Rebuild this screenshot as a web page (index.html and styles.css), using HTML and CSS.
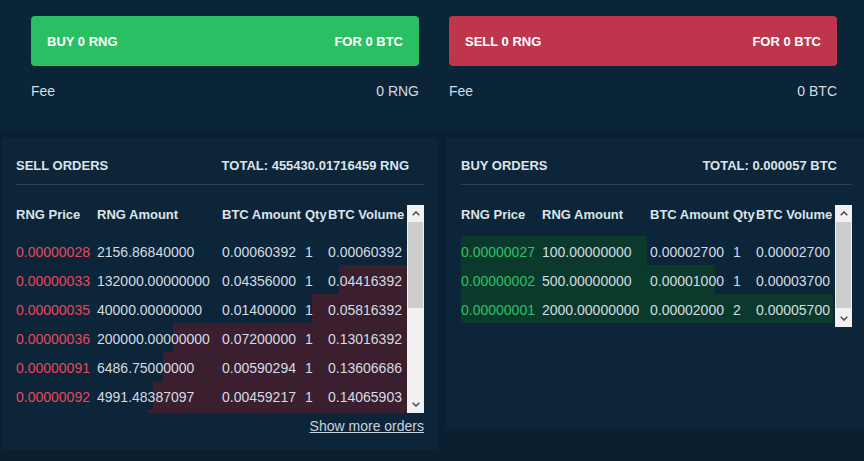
FILE: index.html
```html
<!DOCTYPE html>
<html lang="en">
<head>
    <meta charset="UTF-8">
    <meta name="viewport" content="width=device-width, initial-scale=1.0">
    <title>RNG / BTC</title>
    <link rel="stylesheet" href="styles.css">
</head>
<body>
    <div class="trade">
        <div class="trade-col">
            <div class="trade-btn buy">
                <span>BUY 0 RNG</span>
                <span>FOR 0 BTC</span>
            </div>
            <div class="fee">
                <span>Fee</span>
                <span>0 RNG</span>
            </div>
        </div>
        <div class="trade-col">
            <div class="trade-btn sell">
                <span>SELL 0 RNG</span>
                <span>FOR 0 BTC</span>
            </div>
            <div class="fee">
                <span>Fee</span>
                <span>0 BTC</span>
            </div>
        </div>
    </div>

    <div class="books">
        <!-- sell orders -->
        <div class="book book-sell">
            <div class="book-head">
                <span>SELL ORDERS</span>
                <span>TOTAL: 455430.01716459 RNG</span>
            </div>
            <div class="orders orders-sell">
                <div class="orders-list">
                    <div class="row row-head">
                        <span>RNG Price</span><span>RNG Amount</span><span>BTC Amount</span><span>Qty</span><span>BTC Volume</span>
                    </div>
                    <div class="row" style="--depth:0%">
                        <span class="price">0.00000028</span><span>2156.86840000</span><span>0.00060392</span><span>1</span><span>0.00060392</span>
                    </div>
                    <div class="row" style="--depth:17.4%">
                        <span class="price">0.00000033</span><span>132000.00000000</span><span>0.04356000</span><span>1</span><span>0.04416392</span>
                    </div>
                    <div class="row" style="--depth:24.3%">
                        <span class="price">0.00000035</span><span>40000.00000000</span><span>0.01400000</span><span>1</span><span>0.05816392</span>
                    </div>
                    <div class="row" style="--depth:59.8%">
                        <span class="price">0.00000036</span><span>200000.00000000</span><span>0.07200000</span><span>1</span><span>0.13016392</span>
                    </div>
                    <div class="row" style="--depth:62.4%">
                        <span class="price">0.00000091</span><span>6486.75000000</span><span>0.00590294</span><span>1</span><span>0.13606686</span>
                    </div>
                    <div class="row" style="--depth:65%">
                        <span class="price">0.00000092</span><span>4991.48387097</span><span>0.00459217</span><span>1</span><span>0.14065903</span>
                    </div>
                    <div class="row row-next" style="--depth:66.5%"></div>
                </div>
                <div class="scrollbar">
                    <div class="sb-btn">
                        <svg width="8" height="5" viewBox="0 0 8 5"><path d="M0.7 4.3 L4 1 L7.3 4.3" fill="none" stroke="#505050" stroke-width="1.6"/></svg>
                    </div>
                    <div class="sb-thumb"></div>
                    <div class="sb-btn sb-down">
                        <svg width="8" height="5" viewBox="0 0 8 5"><path d="M0.7 0.7 L4 4 L7.3 0.7" fill="none" stroke="#505050" stroke-width="1.6"/></svg>
                    </div>
                </div>
            </div>
            <div class="more"><a href="#">Show more orders</a></div>
        </div>

        <!-- buy orders -->
        <div class="book book-buy">
            <div class="book-head">
                <span>BUY ORDERS</span>
                <span>TOTAL: 0.000057 BTC</span>
            </div>
            <div class="orders orders-buy">
                <div class="orders-list">
                    <div class="row row-head">
                        <span>RNG Price</span><span>RNG Amount</span><span>BTC Amount</span><span>Qty</span><span>BTC Volume</span>
                    </div>
                    <div class="row" style="--depth:49.7%">
                        <span class="price">0.00000027</span><span>100.00000000</span><span>0.00002700</span><span>1</span><span>0.00002700</span>
                    </div>
                    <div class="row" style="--depth:67.9%">
                        <span class="price">0.00000002</span><span>500.00000000</span><span>0.00001000</span><span>1</span><span>0.00003700</span>
                    </div>
                    <div class="row" style="--depth:99.5%">
                        <span class="price">0.00000001</span><span>2000.00000000</span><span>0.00002000</span><span>2</span><span>0.00005700</span>
                    </div>
                </div>
                <div class="scrollbar">
                    <div class="sb-btn">
                        <svg width="8" height="5" viewBox="0 0 8 5"><path d="M0.7 4.3 L4 1 L7.3 4.3" fill="none" stroke="#505050" stroke-width="1.6"/></svg>
                    </div>
                    <div class="sb-thumb"></div>
                    <div class="sb-btn sb-down">
                        <svg width="8" height="5" viewBox="0 0 8 5"><path d="M0.7 0.7 L4 4 L7.3 0.7" fill="none" stroke="#505050" stroke-width="1.6"/></svg>
                    </div>
                </div>
            </div>
        </div>
    </div>
</body>
</html>
```

FILE: styles.css
```css
*{
    margin: 0px;
    padding: 0px;
    box-sizing: border-box;
}

body{
    background: #0a1f30;
    color: #d3dce3;
    font-family: "Liberation Sans", Arial, sans-serif;
    font-size: 14px;
    width: 864px;
    height: 461px;
    overflow: hidden;
}

/* buy / sell buttons */
.trade{
    background: #0b2538;
    height: 131px;
    padding: 16px 27px 0 31px;
    display: grid;
    grid-template-columns: 1fr 1fr;
    column-gap: 30px;
}
.trade-btn{
    height: 50px;
    border-radius: 4px;
    padding: 0 16px;
    display: flex;
    justify-content: space-between;
    align-items: center;
    color: #fff;
    font-size: 13px;
    font-weight: bold;
}
.trade-btn.buy{
    background: #2abf62;
}
.trade-btn.sell{
    background: #bf364c;
}
.fee{
    margin-top: 17px;
    line-height: 16px;
    display: flex;
    justify-content: space-between;
}

/* order books */
.books{
    margin-top: 7px;
    padding-left: 2px;
    display: flex;
    align-items: flex-start;
    gap: 9px;
}
.book{
    background: #0c2539;
}
.book-sell{
    width: 435px;
    height: 312px;
    padding: 0 13px 0 14px;
}
.book-buy{
    flex: 1;
    height: 290px;
    padding: 0 12px 0 15px;
}
.book-head{
    padding-top: 19px;
    padding-bottom: 9px;
    line-height: 18px;
    border-bottom: 1px solid #2b4255;
    display: flex;
    justify-content: space-between;
    font-size: 13px;
    font-weight: bold;
    color: #dde4ea;
}
.book-sell .book-head{
    padding-right: 15px;
}
.book-buy .book-head{
    padding-right: 15px;
}

.orders{
    margin-top: 20px;
    display: flex;
}
.orders-sell{
    height: 208px;
}
.orders-buy{
    height: 122px;
}
.orders-list{
    flex: 1;
    overflow: hidden;
}

.row{
    display: grid;
    height: 29px;
    padding-top: 6px;
    line-height: 20px;
    white-space: nowrap;
    background-repeat: no-repeat;
    background-size: var(--depth) 100%;
}
.orders-sell .row{
    grid-template-columns: 81px 125px 83px 23px auto;
    background-image: linear-gradient(#3c1f2f, #3c1f2f);
    background-position: right top;
}
.orders-buy .row{
    grid-template-columns: 81px 108px 83px 23px auto;
    background-image: linear-gradient(#0b3a2d, #0b3a2d);
    background-position: left top;
}
.row.row-head{
    height: 31px;
    padding-top: 0px;
    font-size: 13px;
    font-weight: bold;
    color: #dde4ea;
    background: none;
}
.row.row-next{
    height: 3px;
    padding: 0;
}

.orders-sell .price{
    color: #e8475e;
}
.orders-buy .price{
    color: #2dc165;
}

/* scrollbar */
.scrollbar{
    width: 17px;
    background: #f1f1f1;
    display: flex;
    flex-direction: column;
}
.sb-btn{
    height: 17px;
    display: flex;
    align-items: center;
    justify-content: center;
}
.sb-thumb{
    height: 86px;
    margin: 0 1px;
    background: #cdcdcd;
}
.sb-down{
    margin-top: auto;
}

.more{
    margin-top: 4px;
    text-align: right;
    line-height: 18px;
}
.more a{
    color: #c9d3db;
    text-decoration: underline;
}
```
